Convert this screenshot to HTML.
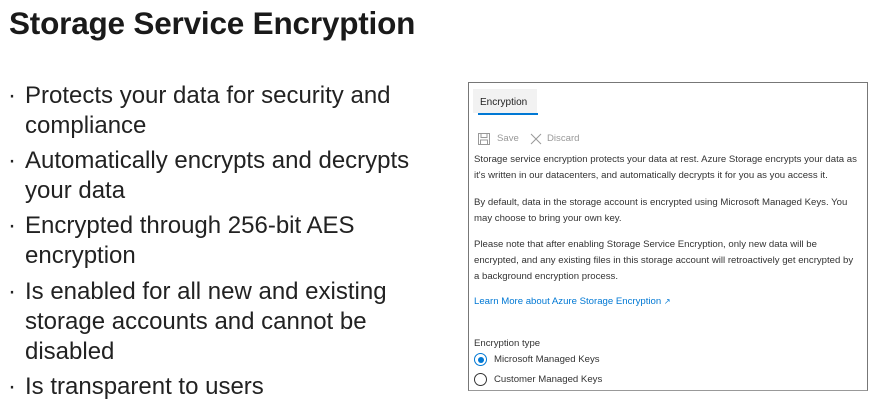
<!DOCTYPE html>
<html><head><style>
body{margin:0;width:878px;height:409px;background:#fff;overflow:hidden;position:relative;font-family:"Liberation Sans",sans-serif;color:#222}
h1{position:absolute;left:9px;top:5px;margin:0;font-size:31.5px;font-weight:bold;letter-spacing:-0.2px;color:#1a1a1a}
.b{position:absolute;left:8px;font-size:24px;line-height:30px;color:#222}
.b span{position:absolute;left:0}
.b div{margin-left:17px}
.p{position:absolute;left:468px;top:82px;width:398px;height:307px;border:1px solid #777;border-bottom:1px solid #999}
.t{position:absolute;left:5px;font-size:9.6px;line-height:16px;color:#333;white-space:nowrap}
</style></head><body>
<h1>Storage Service Encryption</h1>
<div class="b" style="top:81px"><span>·</span><div>Protects your data for security and<br>compliance</div></div>
<div class="b" style="top:146px"><span>·</span><div>Automatically encrypts and decrypts<br>your data</div></div>
<div class="b" style="top:211px"><span>·</span><div>Encrypted through 256-bit AES<br>encryption</div></div>
<div class="b" style="top:277px"><span>·</span><div>Is enabled for all new and existing<br>storage accounts and cannot be<br>disabled</div></div>
<div class="b" style="top:372px"><span>·</span><div>Is transparent to users</div></div>
<div class="p">
<div style="position:absolute;left:4px;top:6px;width:64px;height:24px;background:#f2f2f2"></div>
<div class="t" style="top:12px;left:11px;color:#222;font-size:10px">Encryption</div>
<div style="position:absolute;left:9px;top:30px;width:60px;height:2px;background:#0078d4"></div>
<svg style="position:absolute;left:9px;top:50px" width="12" height="12" viewBox="0 0 12 12" fill="none" stroke="#999"><rect x="0.5" y="0.5" width="11" height="11"/><rect x="3" y="0.5" width="6" height="4"/><rect x="2.5" y="7" width="7" height="4.5"/></svg>
<div class="t" style="top:48px;left:28px;color:#999">Save</div>
<svg style="position:absolute;left:61px;top:50px" width="12" height="12" stroke="#999"><path d="M1 1L11 11M11 1L1 11"/></svg>
<div class="t" style="top:48px;left:78px;color:#999">Discard</div>
<div class="t" style="top:69px">Storage service encryption protects your data at rest. Azure Storage encrypts your data as<br>it's written in our datacenters, and automatically decrypts it for you as you access it.</div>
<div class="t" style="top:112px">By default, data in the storage account is encrypted using Microsoft Managed Keys. You<br>may choose to bring your own key.</div>
<div class="t" style="top:154px">Please note that after enabling Storage Service Encryption, only new data will be<br>encrypted, and any existing files in this storage account will retroactively get encrypted by<br>a background encryption process.</div>
<div class="t" style="top:211px;color:#0078d4">Learn More about Azure Storage Encryption <span style="font-size:8px">↗</span></div>
<div class="t" style="top:253px">Encryption type</div>
<div style="position:absolute;left:5px;top:270px;width:11px;height:11px;border:1.3px solid #0078d4;border-radius:50%"></div>
<div style="position:absolute;left:9px;top:274px;width:6px;height:6px;background:#0078d4;border-radius:50%"></div>
<div class="t" style="top:269px;left:25px">Microsoft Managed Keys</div>
<div style="position:absolute;left:5px;top:290px;width:11px;height:11px;border:1.3px solid #333;border-radius:50%"></div>
<div class="t" style="top:289px;left:25px">Customer Managed Keys</div>
</div>
</body></html>
